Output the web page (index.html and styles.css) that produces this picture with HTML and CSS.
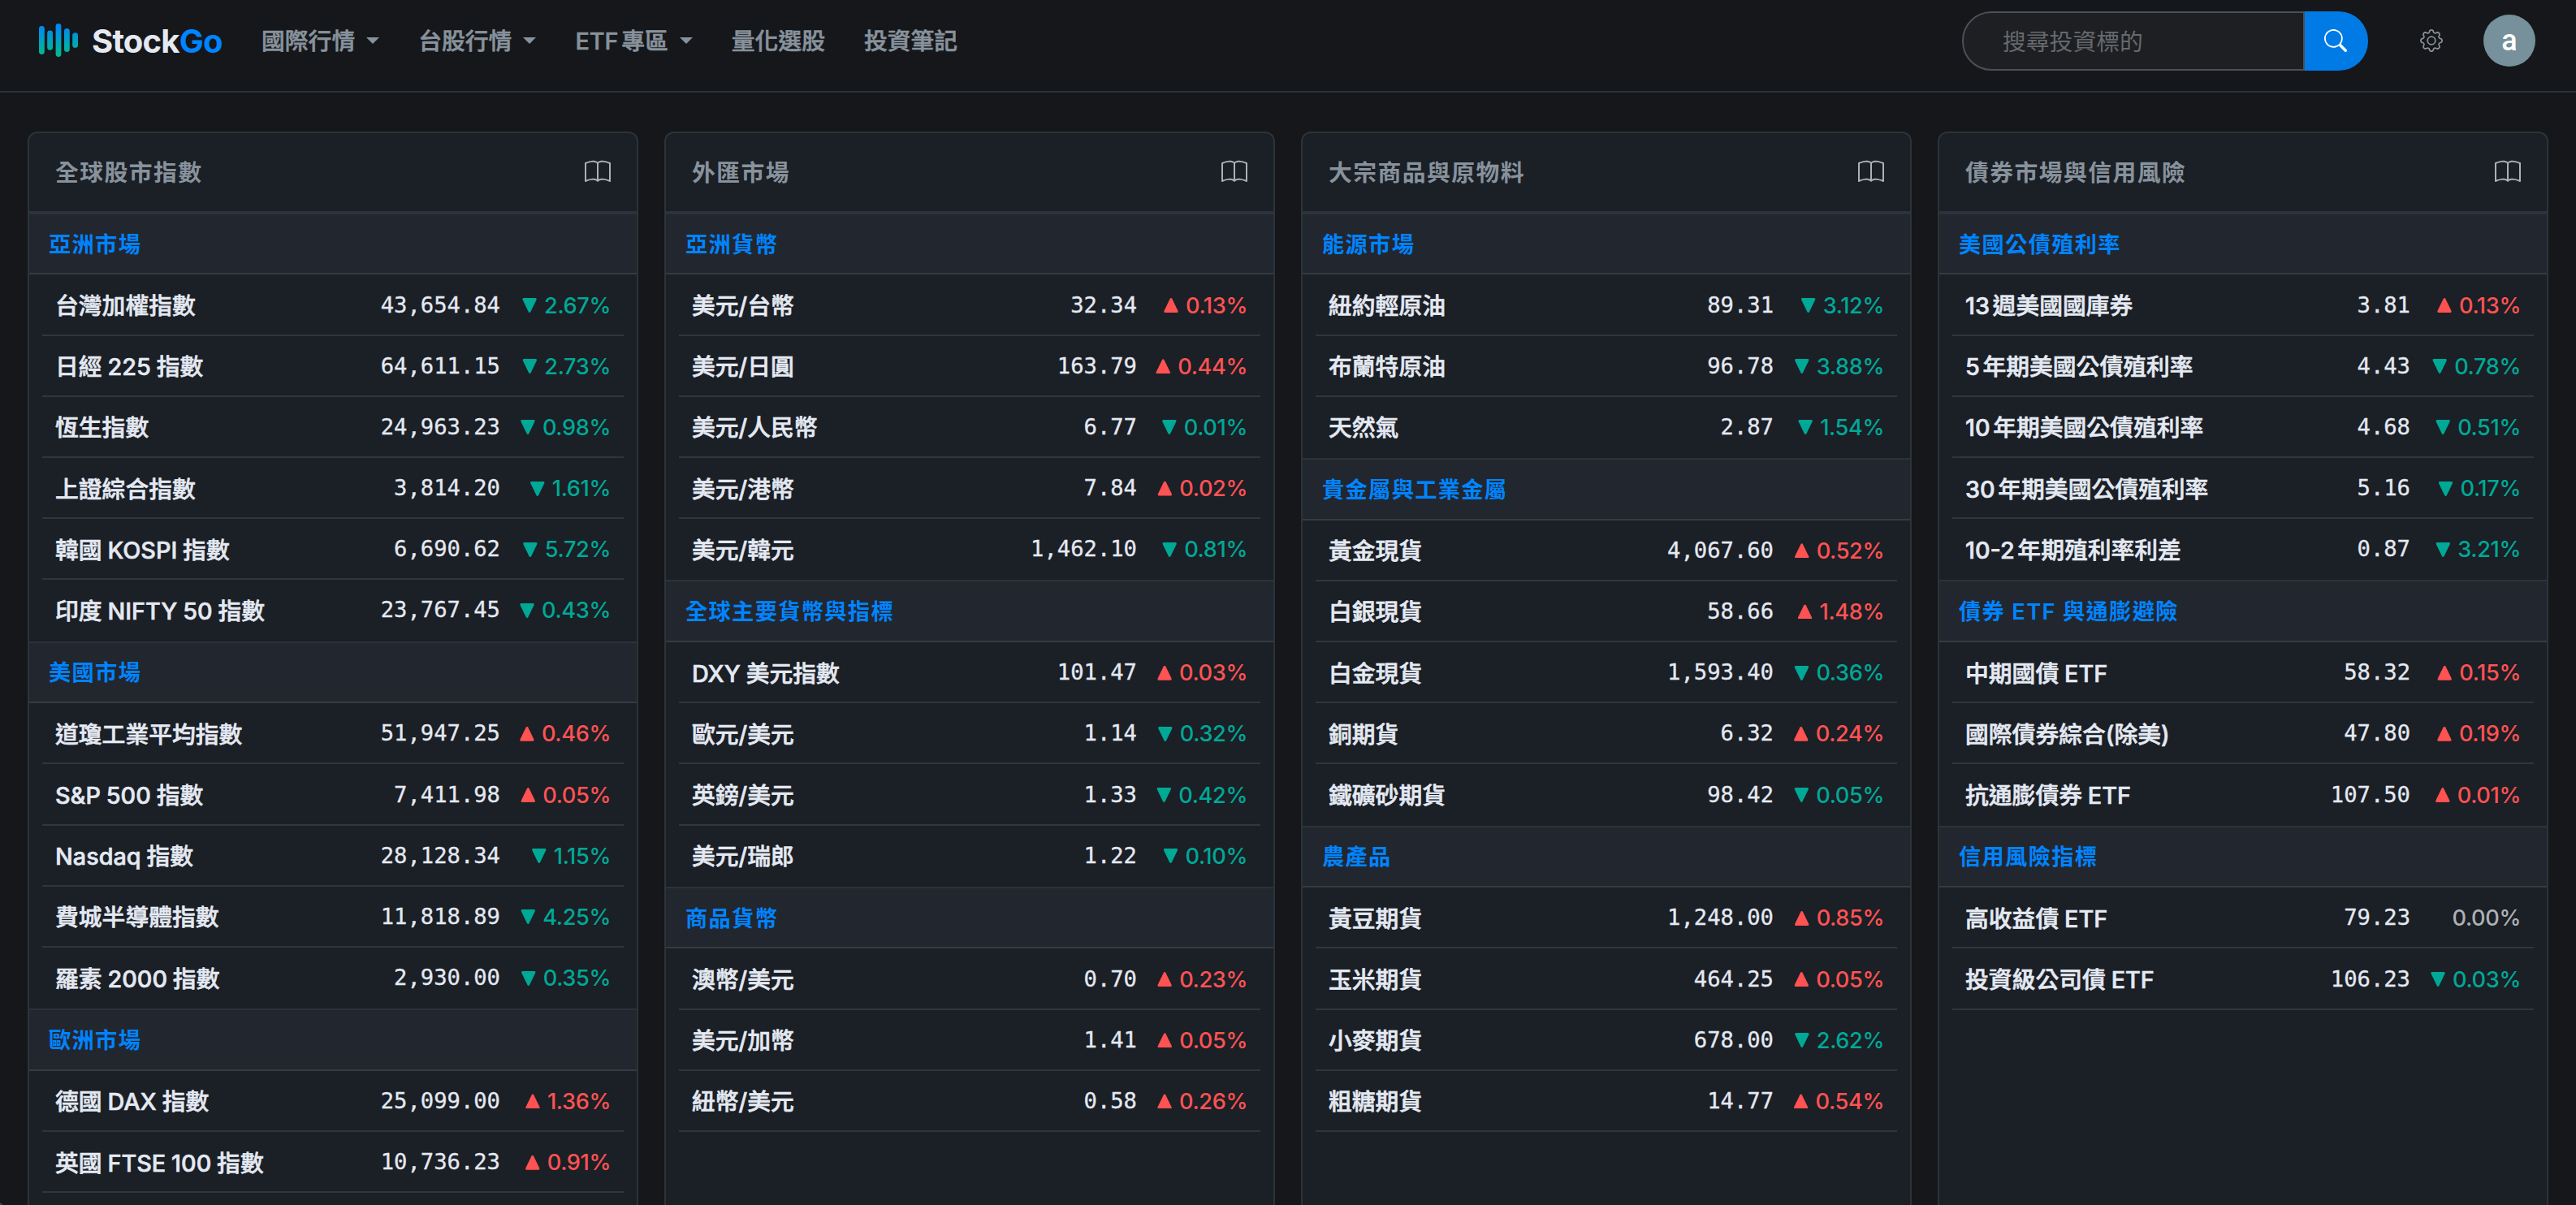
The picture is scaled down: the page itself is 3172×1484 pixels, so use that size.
FILE: index.html
```html
<!DOCTYPE html>
<html lang="zh-Hant">
<head>
<meta charset="utf-8">
<title>StockGo</title>
<link rel="stylesheet" href="styles.css">
</head>
<body>
<svg class="sprite" width="0" height="0" aria-hidden="true">
<symbol id="book" viewBox="0 0 16 16"><path d="M1 2.828c.885-.37 2.154-.769 3.388-.893 1.33-.134 2.458.063 3.112.752v9.746c-.935-.53-2.12-.603-3.213-.493-1.18.12-2.37.461-3.287.811zm7.5-.141c.654-.689 1.782-.886 3.112-.752 1.234.124 2.503.523 3.388.893v9.923c-.918-.35-2.107-.692-3.287-.81-1.094-.111-2.278-.039-3.213.492zM8 1.783C7.015.936 5.587.81 4.287.94c-1.514.153-3.042.672-3.994 1.105A.5.5 0 0 0 0 2.5v11a.5.5 0 0 0 .707.455c.882-.4 2.303-.881 3.68-1.02 1.409-.142 2.59.087 3.223.877a.5.5 0 0 0 .78 0c.633-.79 1.814-1.019 3.222-.877 1.378.139 2.8.62 3.681 1.02A.5.5 0 0 0 16 13.5v-11a.5.5 0 0 0-.293-.455c-.952-.433-2.48-.952-3.994-1.105C10.413.809 8.985.936 8 1.783"/></symbol>
</svg>
<header class="navbar">
  <a class="brand">
    <svg class="logo" viewBox="0 0 48 42" width="48" height="42">
      <defs><linearGradient id="bars" gradientUnits="userSpaceOnUse" x1="0" y1="0" x2="0" y2="42"><stop offset="0" stop-color="#0084ff"/><stop offset="1" stop-color="#00be82"/></linearGradient></defs>
      <g fill="url(#bars)"><rect x="0" y="3" width="6.8" height="35" rx="3.4"/><rect x="10.2" y="8.5" width="6.8" height="24.2" rx="3.4"/><rect x="20.6" y="0" width="6.8" height="41" rx="3.4"/><rect x="31" y="6" width="6.8" height="29" rx="3.4"/><rect x="41.2" y="11.2" width="6.8" height="18.6" rx="3.4"/></g>
    </svg>
    <span class="wordmark">Stock<span class="go">Go</span></span>
  </a>
  <nav class="menu">
    <a class="item drop">國際行情</a>
    <a class="item drop">台股行情</a>
    <a class="item drop">ETF專區</a>
    <a class="item">量化選股</a>
    <a class="item">投資筆記</a>
  </nav>
  <div class="search">
    <div class="field">搜尋投資標的</div>
    <div class="go-btn"><svg viewBox="0 0 16 16" width="28" height="28" fill="currentColor"><path d="M11.742 10.344a6.5 6.5 0 1 0-1.397 1.398h-.001q.044.06.098.115l3.85 3.85a1 1 0 0 0 1.415-1.414l-3.85-3.85a1 1 0 0 0-.115-.1zM12 6.5a5.5 5.5 0 1 1-11 0 5.5 5.5 0 0 1 11 0"/></svg></div>
  </div>
  <svg class="gear" viewBox="0 0 16 16" width="28" height="28" fill="currentColor"><path d="M8 4.754a3.246 3.246 0 1 0 0 6.492 3.246 3.246 0 0 0 0-6.492zM5.754 8a2.246 2.246 0 1 1 4.492 0 2.246 2.246 0 0 1-4.492 0z"/><path d="M9.796 1.343c-.527-1.79-3.065-1.79-3.592 0l-.094.319a.873.873 0 0 1-1.255.52l-.292-.16c-1.64-.892-3.433.902-2.54 2.541l.159.292a.873.873 0 0 1-.52 1.255l-.319.094c-1.79.527-1.79 3.065 0 3.592l.319.094a.873.873 0 0 1 .52 1.255l-.16.292c-.892 1.64.901 3.434 2.541 2.54l.292-.159a.873.873 0 0 1 1.255.52l.094.319c.527 1.79 3.065 1.79 3.592 0l.094-.319a.873.873 0 0 1 1.255-.52l.292.16c1.64.893 3.434-.902 2.54-2.541l-.159-.292a.873.873 0 0 1 .52-1.255l.319-.094c1.79-.527 1.79-3.065 0-3.592l-.319-.094a.873.873 0 0 1-.52-1.255l.16-.292c.893-1.64-.902-3.433-2.541-2.54l-.292.159a.873.873 0 0 1-1.255-.52l-.094-.319zm-2.633.283c.246-.835 1.428-.835 1.674 0l.094.319a1.873 1.873 0 0 0 2.693 1.115l.291-.16c.764-.415 1.6.42 1.184 1.185l-.159.292a1.873 1.873 0 0 0 1.116 2.692l.318.094c.835.246.835 1.428 0 1.674l-.319.094a1.873 1.873 0 0 0-1.115 2.693l.16.291c.415.764-.42 1.6-1.185 1.184l-.291-.159a1.873 1.873 0 0 0-2.693 1.116l-.094.318c-.246.835-1.428.835-1.674 0l-.094-.319a1.873 1.873 0 0 0-2.692-1.115l-.292.16c-.764.415-1.6-.42-1.184-1.185l.159-.291A1.873 1.873 0 0 0 1.945 8.93l-.319-.094c-.835-.246-.835-1.428 0-1.674l.319-.094A1.873 1.873 0 0 0 3.06 4.377l-.16-.292c-.415-.764.42-1.6 1.185-1.184l.292.159a1.873 1.873 0 0 0 2.692-1.115z"/></svg>
  <div class="avatar">a</div>
</header>
<main class="board">
  <article class="card">
    <div class="title">全球股市指數<svg class="book"><use href="#book"/></svg></div>
    <section class="group"><h3>亞洲市場</h3><ul>
      <li><b>台灣加權指數</b><code>43,654.84</code><i class="down">2.67%</i></li>
      <li><b>日經 225 指數</b><code>64,611.15</code><i class="down">2.73%</i></li>
      <li><b>恆生指數</b><code>24,963.23</code><i class="down">0.98%</i></li>
      <li><b>上證綜合指數</b><code>3,814.20</code><i class="down">1.61%</i></li>
      <li><b>韓國 KOSPI 指數</b><code>6,690.62</code><i class="down">5.72%</i></li>
      <li><b>印度 NIFTY 50 指數</b><code>23,767.45</code><i class="down">0.43%</i></li>
    </ul></section>
    <section class="group"><h3>美國市場</h3><ul>
      <li><b>道瓊工業平均指數</b><code>51,947.25</code><i class="up">0.46%</i></li>
      <li><b>S&amp;P 500 指數</b><code>7,411.98</code><i class="up">0.05%</i></li>
      <li><b>Nasdaq 指數</b><code>28,128.34</code><i class="down">1.15%</i></li>
      <li><b>費城半導體指數</b><code>11,818.89</code><i class="down">4.25%</i></li>
      <li><b>羅素 2000 指數</b><code>2,930.00</code><i class="down">0.35%</i></li>
    </ul></section>
    <section class="group"><h3>歐洲市場</h3><ul>
      <li><b>德國 DAX 指數</b><code>25,099.00</code><i class="up">1.36%</i></li>
      <li><b>英國 FTSE 100 指數</b><code>10,736.23</code><i class="up">0.91%</i></li>
      <li></li>
    </ul></section>
  </article>
  <article class="card">
    <div class="title">外匯市場<svg class="book"><use href="#book"/></svg></div>
    <section class="group"><h3>亞洲貨幣</h3><ul>
      <li><b>美元/台幣</b><code>32.34</code><i class="up">0.13%</i></li>
      <li><b>美元/日圓</b><code>163.79</code><i class="up">0.44%</i></li>
      <li><b>美元/人民幣</b><code>6.77</code><i class="down">0.01%</i></li>
      <li><b>美元/港幣</b><code>7.84</code><i class="up">0.02%</i></li>
      <li><b>美元/韓元</b><code>1,462.10</code><i class="down">0.81%</i></li>
    </ul></section>
    <section class="group"><h3>全球主要貨幣與指標</h3><ul>
      <li><b>DXY 美元指數</b><code>101.47</code><i class="up">0.03%</i></li>
      <li><b>歐元/美元</b><code>1.14</code><i class="down">0.32%</i></li>
      <li><b>英鎊/美元</b><code>1.33</code><i class="down">0.42%</i></li>
      <li><b>美元/瑞郎</b><code>1.22</code><i class="down">0.10%</i></li>
    </ul></section>
    <section class="group"><h3>商品貨幣</h3><ul>
      <li><b>澳幣/美元</b><code>0.70</code><i class="up">0.23%</i></li>
      <li><b>美元/加幣</b><code>1.41</code><i class="up">0.05%</i></li>
      <li><b>紐幣/美元</b><code>0.58</code><i class="up">0.26%</i></li>
    </ul></section>
  </article>
  <article class="card">
    <div class="title">大宗商品與原物料<svg class="book"><use href="#book"/></svg></div>
    <section class="group"><h3>能源市場</h3><ul>
      <li><b>紐約輕原油</b><code>89.31</code><i class="down">3.12%</i></li>
      <li><b>布蘭特原油</b><code>96.78</code><i class="down">3.88%</i></li>
      <li><b>天然氣</b><code>2.87</code><i class="down">1.54%</i></li>
    </ul></section>
    <section class="group"><h3>貴金屬與工業金屬</h3><ul>
      <li><b>黃金現貨</b><code>4,067.60</code><i class="up">0.52%</i></li>
      <li><b>白銀現貨</b><code>58.66</code><i class="up">1.48%</i></li>
      <li><b>白金現貨</b><code>1,593.40</code><i class="down">0.36%</i></li>
      <li><b>銅期貨</b><code>6.32</code><i class="up">0.24%</i></li>
      <li><b>鐵礦砂期貨</b><code>98.42</code><i class="down">0.05%</i></li>
    </ul></section>
    <section class="group"><h3>農產品</h3><ul>
      <li><b>黃豆期貨</b><code>1,248.00</code><i class="up">0.85%</i></li>
      <li><b>玉米期貨</b><code>464.25</code><i class="up">0.05%</i></li>
      <li><b>小麥期貨</b><code>678.00</code><i class="down">2.62%</i></li>
      <li><b>粗糖期貨</b><code>14.77</code><i class="up">0.54%</i></li>
    </ul></section>
  </article>
  <article class="card">
    <div class="title">債券市場與信用風險<svg class="book"><use href="#book"/></svg></div>
    <section class="group"><h3>美國公債殖利率</h3><ul>
      <li><b>13週美國國庫券</b><code>3.81</code><i class="up">0.13%</i></li>
      <li><b>5年期美國公債殖利率</b><code>4.43</code><i class="down">0.78%</i></li>
      <li><b>10年期美國公債殖利率</b><code>4.68</code><i class="down">0.51%</i></li>
      <li><b>30年期美國公債殖利率</b><code>5.16</code><i class="down">0.17%</i></li>
      <li><b>10-2年期殖利率利差</b><code>0.87</code><i class="down">3.21%</i></li>
    </ul></section>
    <section class="group"><h3>債券 ETF 與通膨避險</h3><ul>
      <li><b>中期國債 ETF</b><code>58.32</code><i class="up">0.15%</i></li>
      <li><b>國際債券綜合(除美)</b><code>47.80</code><i class="up">0.19%</i></li>
      <li><b>抗通膨債券 ETF</b><code>107.50</code><i class="up">0.01%</i></li>
    </ul></section>
    <section class="group"><h3>信用風險指標</h3><ul>
      <li><b>高收益債 ETF</b><code>79.23</code><i>0.00%</i></li>
      <li><b>投資級公司債 ETF</b><code>106.23</code><i class="down">0.03%</i></li>
    </ul></section>
  </article>
</main>
<div class="corner"></div>
</body>
</html>
```
FILE: styles.css
```css
* { box-sizing: border-box; }
html, body { height: 100%; }
body {
  margin: 0;
  display: flex;
  flex-direction: column;
  overflow: hidden;
  background: #16171a;
  color: #e4e9f2;
  font-family: Inter, "Noto Sans CJK TC", sans-serif;
  font-size: 28.8px;
  text-autospace: normal;
  white-space: nowrap;
}
.sprite { position: absolute; }

/* Navigation bar */
.navbar {
  flex: none;
  display: flex;
  align-items: center;
  height: 114px;
  padding: 0 50px 12px 48px;
  border-bottom: 2px solid #2b333a;
}
.brand { display: flex; align-items: center; gap: 17px; width: 274px; }
.logo { display: block; }
.wordmark { font-size: 40px; font-weight: 700; letter-spacing: -0.8px; line-height: 48px; padding-top: 2px; }
.go { color: #0084ff; }
.menu { display: flex; gap: 48px; color: #87929c; font-weight: 500; -webkit-text-stroke: 0.6px; }
.item { display: flex; align-items: center; line-height: 43px; }
.drop::after {
  content: "";
  margin-left: 14px;
  border: 8px solid transparent;
  border-top-color: currentColor;
  border-bottom: 0;
}
.search { display: flex; width: 500px; height: 73px; margin-left: auto; }
.field {
  flex: 1;
  display: flex;
  align-items: center;
  padding: 0 0 2px 48px;
  border: 2px solid #495057;
  border-radius: 36px 0 0 36px;
  background: #1e1f22;
  color: #65696e;
}
.go-btn {
  display: flex;
  align-items: center;
  width: 78px;
  padding-left: 24px;
  border-radius: 0 36px 36px 0;
  background: #007be6;
  color: #fff;
}
.gear { margin: 0 50px 0 64px; color: #87929c; }
.avatar {
  width: 64px;
  height: 64px;
  border-radius: 50%;
  background: #76919b;
  color: #fff;
  font: 500 36px/64px Roboto, sans-serif;
  text-align: center;
}

/* Market cards */
.board {
  flex: 1;
  display: grid;
  grid-template-columns: repeat(4, 1fr);
  gap: 32px;
  padding: 48px 34px 0;
}
.card {
  border: 2px solid #2a3439;
  border-bottom: 0;
  border-radius: 12px 12px 0 0;
  background: #1b1f26;
}
.title {
  display: flex;
  align-items: center;
  justify-content: space-between;
  height: 99.72px;
  padding: 0 32px 2px;
  border-bottom: 4px solid #2a343a;
  color: #87929c;
  font-weight: 600;
  letter-spacing: 1.44px;
}
.book { width: 32px; height: 32px; margin-top: 2px; fill: #adb0b4; }
.group h3 {
  display: flex;
  align-items: center;
  height: 76.7px;
  margin: 0;
  padding: 0 24px 3px;
  border-top: 2px solid #2b333a;
  border-bottom: 2px solid #373b3f;
  background: #22272f;
  color: #0084ff;
  font-size: 27.2px;
  font-weight: 600;
  letter-spacing: 1.36px;
}
.title + .group h3 { height: 74.7px; border-top: 0; }
.group ul { margin: 0; padding: 0 16px; list-style: none; }
.group li {
  display: flex;
  align-items: center;
  height: 75.2px;
  padding: 0 16px;
  border-bottom: 2px solid #323639;
}
.group:not(:last-child) li:last-child { border-bottom-color: transparent; }
.group b { flex: 1; padding-bottom: 1px; font-weight: 500; word-spacing: -0.8px; -webkit-text-stroke: 0.6px; }
.group code { font: 27.2px "DejaVu Sans Mono", monospace; -webkit-text-stroke: 0.3px; }
.group i {
  display: flex;
  align-items: center;
  justify-content: flex-end;
  gap: 9px;
  width: 136px;
  padding-top: 2px;
  color: #adb0b4;
  font-size: 27.2px;
  font-style: normal;
  font-weight: 500;
  letter-spacing: -0.4px;
}
.group .up { color: #ff5252; }
.group .down { color: #00a896; }
.up::before, .down::before {
  content: "";
  width: 18px;
  height: 18px;
  background: currentColor;
  clip-path: path("M9 0Q9.8 0 10.2 .8L17.6 16Q18 18 16.4 18H1.6Q0 18 .4 16L7.8 .8Q8.2 0 9 0Z");
}
.down::before { transform: scaleY(-1); }

/* Rounded window corner */
.corner {
  position: absolute;
  left: 0;
  bottom: 0;
  width: 16px;
  height: 12px;
  background: radial-gradient(circle at 22px -12px, transparent 30px, #55575c 31px, #0b0a14 33px);
}
```
